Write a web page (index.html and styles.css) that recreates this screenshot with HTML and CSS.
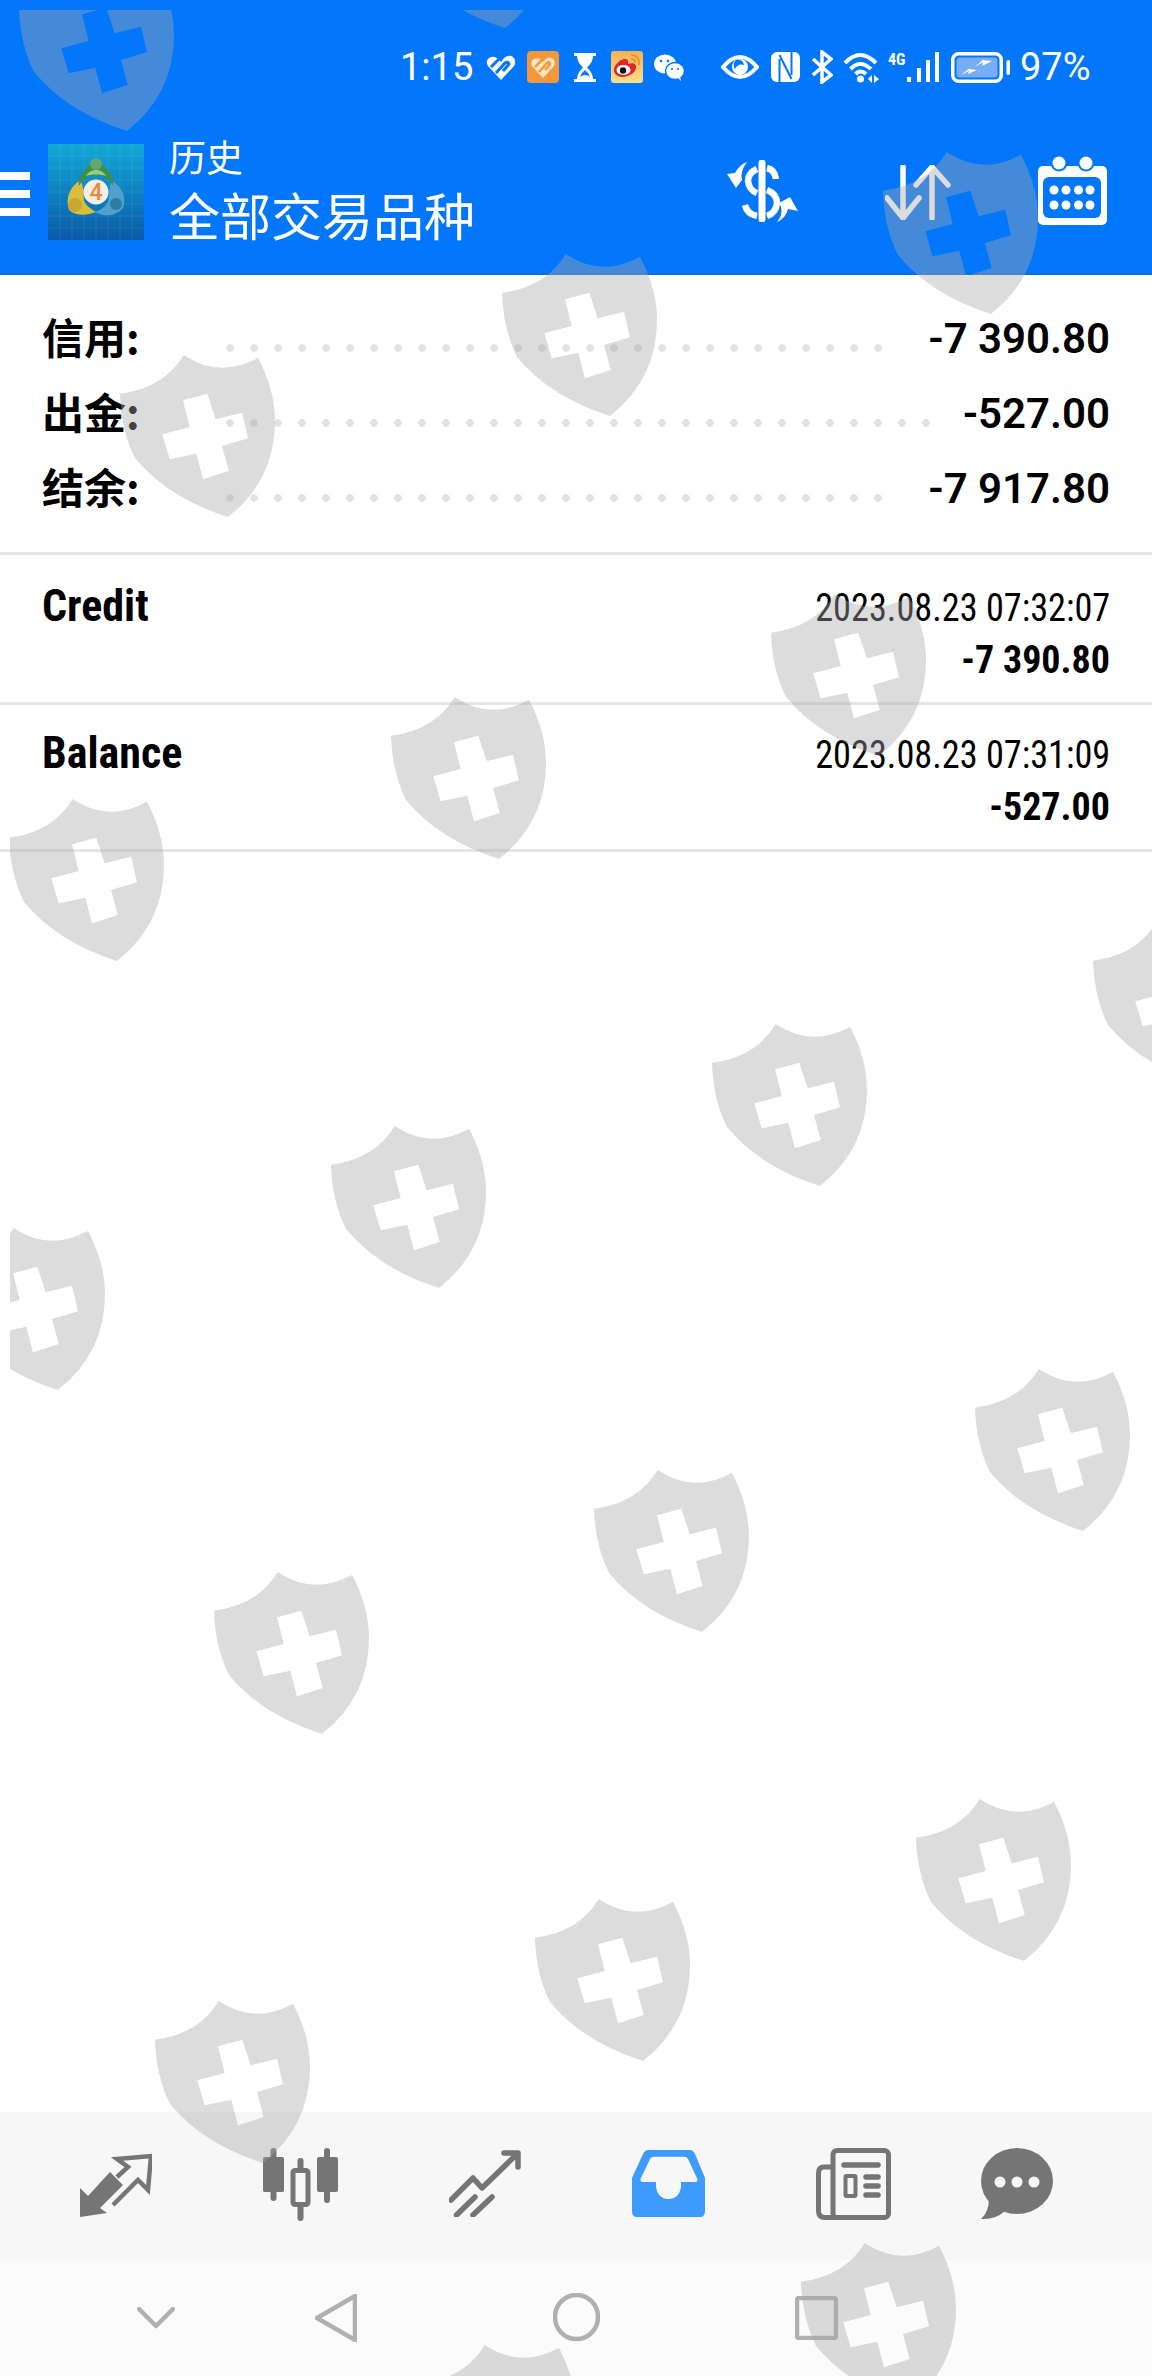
FILE: index.html
```html
<!DOCTYPE html>
<html lang="zh-CN">

<head>
    <meta charset="UTF-8">
    <meta name="viewport" content="width=device-width, initial-scale=1.0">
    <title>历史</title>
    <link rel="stylesheet" href="styles.css">
</head>

<body>
    <div id="screen">
        <!-- Blue top area: phone status bar + app toolbar -->
        <header id="top">
            <div class="statusbar">
                <span class="st-time">1:15</span>
                <svg class="si si-heart" viewBox="0 0 30 25">
                    <path d="M15 25 L2 11 Q-1 6 3 3 Q8 0 12 4 L15 7 L18 3 Q23 -1 27 2 Q31 6 28 11 Z" fill="#fff" />
                    <path d="M5 12 L13 4 M10 18 L19 8 Q22 6 23 9 L17 16" fill="none" stroke="#0277fb" stroke-width="3" />
                </svg>
                <svg class="si si-box" viewBox="0 0 32 32">
                    <rect width="32" height="32" rx="4" fill="#f5983c" />
                    <path d="M16 27 L5 15 Q3 10 7 8 Q11 6 14 9 L16 11 L19 8 Q23 5 26 8 Q29 11 27 15 Z" fill="#fde6c8" />
                    <path d="M8 16 L15 9 M12 21 L20 12 Q22 10 23 13 L18 19" fill="none" stroke="#f5983c" stroke-width="2.500" />
                </svg>
                <svg class="si si-glass" viewBox="0 0 24 29">
                    <path d="M1 0 H23 V3 H20 Q20 9 14 14.500 Q20 20 20 26 H23 V29 H1 V26 H4 Q4 20 10 14.500 Q4 9 4 3 H1 Z" fill="#fff" />
                    <path d="M12 17 Q8 20 7 24 Q12 20 17 24 Q16 20 12 17 Z" fill="#0277fb" />
                </svg>
                <svg class="si si-weibo" viewBox="0 0 32 32">
                    <defs>
                        <linearGradient id="weibo-bg" x1="0" y1="0" x2="0" y2="1">
                            <stop offset="0" stop-color="#f6b04e" />
                            <stop offset="1" stop-color="#fbe08a" />
                        </linearGradient>
                    </defs>
                    <rect width="32" height="32" rx="3" fill="url(#weibo-bg)" />
                    <path d="M3 19 C3 13 11 7 15 8 C18 9 17 12 17 13 C22 11 26 13 25 17 C24 23 16 26 11 26 C7 26 3 23 3 19 Z" fill="#e0242c" />
                    <ellipse cx="12.500" cy="19" rx="7" ry="5" fill="#fff" />
                    <circle cx="12" cy="19.500" r="3.200" fill="#111" />
                    <path d="M20 4 Q29 4 28 14 M20 8 Q25 8 24 12" fill="none" stroke="#e88a2c" stroke-width="1.500" />
                </svg>
                <svg class="si si-chat" viewBox="0 0 30 27">
                    <ellipse cx="11" cy="10" rx="11" ry="9.500" fill="#fff" />
                    <ellipse cx="21" cy="17" rx="9.500" ry="8.500" fill="#fff" stroke="#0277fb" stroke-width="1.500" />
                    <path d="M24 24 L27 27 L26 22 Z" fill="#fff" />
                    <circle cx="7" cy="7" r="1.300" fill="#0277fb" />
                    <circle cx="14" cy="7" r="1.300" fill="#0277fb" />
                    <circle cx="18" cy="15" r="1.100" fill="#0277fb" />
                    <circle cx="24" cy="15" r="1.100" fill="#0277fb" />
                </svg>
                <svg class="si si-eye" viewBox="0 0 38 26">
                    <path d="M2 13 Q19 -7 36 13 Q19 33 2 13 Z" fill="none" stroke="#fff" stroke-width="4" />
                    <circle cx="19" cy="13" r="8" fill="#fff" />
                    <path d="M15 6 Q22 5 23 11 Q17 9 14 15 Q11 10 15 6 Z" fill="#0277fb" />
                </svg>
                <svg class="si si-nfc" viewBox="0 0 29 30">
                    <rect width="29" height="30" rx="6" fill="#fff" />
                    <path d="M8.500 7 V30 M8.500 3 L20.500 27 M20.500 0 V23" fill="none" stroke="#0277fb" stroke-width="2" />
                </svg>
                <svg class="si si-bt" viewBox="0 0 22 34">
                    <path d="M2 9 L20 25 L11 32 V2 L20 9 L2 25" fill="none" stroke="#fff" stroke-width="3.500" />
                </svg>
                <svg class="si si-wifi" viewBox="0 0 37 32">
                    <path d="M2 12 Q17 -4 33 12 M7.500 18 Q17 8 28 18 M12.500 23 Q17.500 18 23 23" fill="none" stroke="#fff" stroke-width="4" />
                    <circle cx="17.500" cy="28" r="3.500" fill="#fff" />
                    <path d="M25 28 L29 24 V32 Z M31 24 L36 28 L31 32 Z" fill="#fff" />
                </svg>
                <div class="si si-signal">
                    <span class="st-4g">4G</span>
                    <svg class="si-bars" viewBox="0 0 33 30">
                        <path d="M3 30 V25 M13 30 V16 M22 30 V8 M31 30 V0" stroke="#fff" stroke-width="4" />
                    </svg>
                </div>
                <svg class="si si-battery" viewBox="0 0 59 31">
                    <rect x="1.750" y="1.750" width="48.500" height="27.500" rx="6" fill="none" stroke="#fff" stroke-width="3.500" />
                    <rect x="5.500" y="5.500" width="41" height="20" rx="3" fill="#77adf2" />
                    <path d="M10 23 L18 19 L17 22 L26 18 L18 17 L20 15 Z M24 15 L32 10 L31 14 L41 9 L32 8 L34 6 Z" fill="#fff" />
                    <rect x="55.500" y="8" width="3.500" height="15" rx="1.700" fill="#fff" />
                </svg>
                <span class="st-batt">97%</span>
            </div>
            <div class="toolbar">
                <div class="burger"><span></span><span></span><span></span></div>
                <svg class="app-logo" viewBox="0 0 96 96">
                    <defs>
                        <linearGradient id="logo-bg" x1="0" y1="0" x2="0" y2="1">
                            <stop offset="0" stop-color="#12a8d6" />
                            <stop offset="1" stop-color="#0a5aa8" />
                        </linearGradient>
                    </defs>
                    <rect width="96" height="96" fill="url(#logo-bg)" />
                    <path d="M12 0 V96 M24 0 V96 M36 0 V96 M48 0 V96 M60 0 V96 M72 0 V96 M84 0 V96 M0 12 H96 M0 24 H96 M0 36 H96 M0 48 H96 M0 60 H96 M0 72 H96 M0 84 H96" stroke="#fff" stroke-opacity=".08" />
                    <path d="M33 36 C22 42 17 54 21 66 C29 73 40 71 48 68 C38 62 34 58 36 48 Z" fill="#d9be3e" />
                    <path d="M63 36 C74 42 79 54 75 64 C67 73 56 73 47 68 C58 64 62 58 61 48 Z" fill="#4fa0cc" />
                    <path d="M31 42 C29 28 40 24 48 15 C56 24 67 28 65 42 C60 33 55 31 48 31 C41 31 36 33 31 42 Z" fill="#3d8f50" />
                    <path d="M38 32 C40 28 44 26 48 26 C52 26 56 28 58 32 C54 30 42 30 38 32 Z" fill="#9ccb7c" />
                    <circle cx="48" cy="20" r="6" fill="#62a86a" />
                    <circle cx="27" cy="61" r="7" fill="#c7a633" />
                    <circle cx="68" cy="60" r="6" fill="#2b7da8" />
                    <circle cx="48" cy="48" r="12.500" fill="#f5eee4" />
                    <text x="48" y="56" class="logo-four">4</text>
                </svg>
                <div class="titles">
                    <div class="title-small">历史</div>
                    <div class="title-main">全部交易品种</div>
                </div>
                <svg class="tool tool-dollar" viewBox="0 0 72 62">
                    <path d="M36 3 V59" stroke="#fff" stroke-width="7" stroke-linecap="round" />
                    <path d="M41 8 Q49 10 50 19 M31 9 Q22 13 22 21 Q23 30 31 33 M41 30 Q51 34 51 43 Q50 53 41 56 M19 45 Q21 54 31 56" fill="none" stroke="#fff" stroke-width="6.500" />
                    <path d="M21 2 Q13 5 9 13 L1 14 L10 28 L16 20 Q14 11 21 2 Z" fill="#fff" />
                    <path d="M51 62 Q60 58 62 49 L72 51 L64 37 L53 43 L55 47 Q57 55 51 62 Z" fill="#fff" />
                </svg>
                <svg class="tool tool-arrows" viewBox="0 0 66 55">
                    <path d="M18 2 V53 M2 33 L18 53 L34 33 M47 53 V2 M31 20 L47 2 L63 20" fill="none" stroke="#fff" stroke-width="5.500" stroke-linecap="round" stroke-linejoin="round" />
                </svg>
                <svg class="tool tool-cal" viewBox="0 0 69 69">
                    <rect y="10" width="69" height="59" rx="5" fill="#fff" />
                    <rect x="5" y="21" width="58" height="41" rx="6" fill="#0277fb" />
                    <circle cx="21" cy="7" r="8.500" fill="#0277fb" />
                    <circle cx="48" cy="7" r="8.500" fill="#0277fb" />
                    <circle cx="21" cy="7" r="6.500" fill="#fff" />
                    <circle cx="48" cy="7" r="6.500" fill="#fff" />
                    <g fill="#fff">
                        <circle cx="16" cy="34" r="4.500" />
                        <circle cx="28" cy="34" r="4.500" />
                        <circle cx="40.500" cy="34" r="4.500" />
                        <circle cx="52" cy="34" r="4.500" />
                        <circle cx="16" cy="49" r="4.500" />
                        <circle cx="28" cy="49" r="4.500" />
                        <circle cx="40.500" cy="49" r="4.500" />
                        <circle cx="52" cy="49" r="4.500" />
                    </g>
                </svg>
            </div>
        </header>

        <!-- Totals -->
        <section class="summary">
            <div class="sum-row sum-long">
                <span class="sum-label">信用:</span><span class="sum-dots"></span><span class="sum-value">-7 390.80</span>
            </div>
            <div class="sum-row sum-short">
                <span class="sum-label">出金:</span><span class="sum-dots"></span><span class="sum-value">-527.00</span>
            </div>
            <div class="sum-row sum-long">
                <span class="sum-label">结余:</span><span class="sum-dots"></span><span class="sum-value">-7 917.80</span>
            </div>
        </section>

        <!-- Deals -->
        <section class="deal deal-first">
            <div class="deal-name">Credit</div>
            <div class="deal-right">
                <div class="deal-date">2023.08.23 07:32:07</div>
                <div class="deal-amount">-7 390.80</div>
            </div>
        </section>
        <section class="deal">
            <div class="deal-name">Balance</div>
            <div class="deal-right">
                <div class="deal-date">2023.08.23 07:31:09</div>
                <div class="deal-amount">-527.00</div>
            </div>
        </section>

        <div class="spacer"></div>

        <nav class="tabs">
            <svg class="tab tab-trade" viewBox="0 0 72 64">
                <path d="M0 35 L8 43 L30 19 L43 32 L20 55 L27 60 L0 64 Z" fill="#757575" />
                <path d="M33 52 L58 27 L68 37 L71 3 L37 6 L48 14 L37 24" fill="none" stroke="#757575" stroke-width="4.500" />
            </svg>
            <svg class="tab tab-candles" viewBox="0 0 75 74">
                <g stroke="#757575" stroke-linecap="round">
                    <path d="M10.500 3 V50 M37.500 13 V70 M64 3 V52" stroke-width="6" />
                </g>
                <rect y="9" width="21" height="35" rx="2" fill="#757575" />
                <rect x="54" y="9" width="21" height="35" rx="2" fill="#757575" />
                <rect x="30" y="22.500" width="15" height="34" rx="2" fill="#f7f7f7" stroke="#757575" stroke-width="5" />
            </svg>
            <svg class="tab tab-chart" viewBox="0 0 72 67">
                <path d="M2 50 L24 28 L33 38 L68 4 M55 3 H69 V17 M7.500 65 L26 47 M24 65 L43 47" fill="none" stroke="#757575" stroke-width="5.500" stroke-linecap="round" stroke-linejoin="round" />
            </svg>
            <svg class="tab tab-inbox" viewBox="0 0 73 67">
                <path d="M16 0 H58 Q61 0 63 4 L73 28 V61 Q73 67 68 67 H5 Q0 67 0 61 V28 L11 4 Q13 0 16 0 Z" fill="#3d9bff" />
                <path d="M22 6.700 H52 Q55 6.700 56 9 L65.400 29 Q66 32 63 32 H49 V37 Q47 49 36.500 49 Q26 49 24 37 V32 H11 Q8 32 8.500 29 L18 9 Q19 6.700 22 6.700 Z" fill="#f7f7f7" />
            </svg>
            <svg class="tab tab-news" viewBox="0 0 75 72">
                <rect x="17" y="2.500" width="55.500" height="67" rx="4" fill="none" stroke="#757575" stroke-width="5" />
                <path d="M16 19 H8 Q2.500 19 2.500 25 V63 Q2.500 69.500 9 69.500 H20" fill="none" stroke="#757575" stroke-width="5" />
                <path d="M28 17 H62 M50 29 H62 M50 38 H62 M50 47 H62" stroke="#757575" stroke-width="5.500" stroke-linecap="round" />
                <rect x="29.500" y="28" width="10" height="20" rx="1" fill="none" stroke="#757575" stroke-width="4" />
            </svg>
            <svg class="tab tab-talk" viewBox="0 0 72 72">
                <ellipse cx="36" cy="33" rx="36" ry="33" fill="#757575" />
                <path d="M8 50 Q8 64 0 71 Q14 72 24 63 Z" fill="#757575" />
                <circle cx="19" cy="34" r="5.500" fill="#f7f7f7" />
                <circle cx="36" cy="34" r="5.500" fill="#f7f7f7" />
                <circle cx="53" cy="34" r="5.500" fill="#f7f7f7" />
            </svg>
        </nav>

        <nav class="sysbar">
            <svg class="sys sys-down" viewBox="0 0 38 22">
                <path d="M2 2 L19 19 L36 2" />
            </svg>
            <svg class="sys sys-back" viewBox="0 0 42 48">
                <path d="M40 2 V46 L2 24 Z" />
            </svg>
            <svg class="sys sys-home" viewBox="0 0 47 48">
                <ellipse cx="23.500" cy="24" rx="21.500" ry="22" />
            </svg>
            <svg class="sys sys-recent" viewBox="0 0 43 44">
                <rect x="2" y="2" width="39" height="40" rx="2" />
            </svg>
        </nav>

        <!-- Watermark lies over everything -->
        <svg class="watermark" viewBox="0 0 1152 2376">
            <defs>
                <path id="shield" fill-rule="evenodd" d="M63.700 0 Q100 24 138 2.700 Q155 35 155 66 Q155 125 108 162 Q48 143 15 103 Q1 75 0 38.700 Q44 33 63.700 0 Z M63 45.300 L87.300 38.700 L95.700 64.300 L122 57.700 L128 83.300 L102 91 L108.700 116 L83 124.300 L76.300 98.700 L49.700 104.300 L42.300 79.300 L69.700 72 Z" />
            </defs>
            <use href="#shield" x="19" y="-31" />
            <use href="#shield" x="397" y="-134" />
            <use href="#shield" x="120" y="355" />
            <use href="#shield" x="502" y="254" />
            <use href="#shield" x="883" y="152" />
            <use href="#shield" x="9" y="799" />
            <use href="#shield" x="391" y="697" />
            <use href="#shield" x="771" y="594" />
            <use href="#shield" x="-50" y="1228" />
            <use href="#shield" x="331" y="1126" />
            <use href="#shield" x="712" y="1024" />
            <use href="#shield" x="1093" y="922" />
            <use href="#shield" x="214" y="1572" />
            <use href="#shield" x="594" y="1470" />
            <use href="#shield" x="975" y="1369" />
            <use href="#shield" x="155" y="2001" />
            <use href="#shield" x="535" y="1899" />
            <use href="#shield" x="916" y="1799" />
            <use href="#shield" x="421" y="2345" />
            <use href="#shield" x="801" y="2243" />
        </svg>
    </div>
</body>

</html>
```

FILE: styles.css
```css
body {
    margin: 0;
    background-color: #ffffff;
    font-family: Roboto, "Noto Sans CJK SC", sans-serif;
    color: #000000;
}

#screen {
    position: relative;
    width: 1152px;
    height: 2376px;
    overflow: hidden;
    display: flex;
    flex-direction: column;
}

.watermark {
    position: absolute;
    left: 0;
    top: 0;
    width: 1152px;
    height: 2376px;
    clip-path: inset(10px 0 0 10px);
    fill: rgba(168, 168, 168, 0.4);
    pointer-events: none;
}

/* top */
#top {
    height: 273px;
    background-color: #0277fb;
    border-bottom: 2px solid #0b6edc;
    color: #ffffff;
}

.statusbar {
    height: 134px;
    padding-left: 400px;
    display: flex;
    align-items: center;
}

.statusbar span {
    font-size: 38px;
    line-height: 1;
}

.st-time {
    width: 74px;
}

.si {
    display: block;
    flex: none;
}

.si-heart { width: 30px; height: 25px; margin-left: 12px; }
.si-box { width: 32px; height: 32px; margin-left: 11px; }
.si-glass { width: 24px; height: 29px; margin-left: 14px; }
.si-weibo { width: 32px; height: 32px; margin-left: 14px; }
.si-chat { width: 30px; height: 27px; margin-left: 11px; }
.si-eye { width: 38px; height: 26px; margin-left: 37px; }
.si-nfc { width: 29px; height: 30px; margin-left: 12px; }
.si-bt { width: 22px; height: 34px; margin-left: 11px; }
.si-wifi { width: 37px; height: 32px; margin-left: 10px; }
.si-signal { position: relative; width: 51px; height: 30px; margin-left: 8px; }
.si-battery { width: 59px; height: 31px; margin-left: 12px; }

.si-bars {
    position: absolute;
    right: 0;
    top: 0;
    width: 33px;
    height: 30px;
}

.statusbar .st-4g {
    position: absolute;
    left: 0;
    top: 0;
    font-size: 16px;
    font-weight: 700;
    font-stretch: 75%;
}

.statusbar .st-batt {
    margin-left: 10px;
}

.toolbar {
    height: 139px;
    display: flex;
    align-items: flex-start;
}

.burger {
    width: 30px;
    margin-top: 38px;
    display: flex;
    flex-direction: column;
    gap: 10px;
}

.burger span {
    display: block;
    height: 8px;
    background-color: #ffffff;
}

.app-logo {
    width: 96px;
    height: 96px;
    margin-left: 18px;
    margin-top: 10px;
}

.logo-four {
    font-family: Roboto, sans-serif;
    font-size: 23px;
    font-weight: 500;
    text-anchor: middle;
    fill: #e8893c;
}

.titles {
    width: 557px;
    margin-left: 25px;
    font-family: "Noto Sans CJK SC", sans-serif;
}

.title-small {
    font-size: 37px;
    line-height: 44px;
}

.title-main {
    font-size: 51px;
    line-height: 62px;
    margin-top: 5px;
}

.tool { display: block; flex: none; }
.tool-dollar { width: 72px; height: 62px; margin-top: 26px; }
.tool-arrows { width: 66px; height: 55px; margin-top: 31px; margin-left: 87px; }
.tool-cal { width: 69px; height: 69px; margin-top: 22px; margin-left: 87px; }

/* totals */
.summary {
    padding: 26px 42px 26px;
    border-bottom: 3px solid #e6e6e6;
}

.sum-row {
    height: 75px;
    display: flex;
    align-items: center;
}

.sum-label {
    width: 184px;
    margin-bottom: 6px;
    font-family: "Noto Sans CJK SC", sans-serif;
    font-size: 42px;
    font-weight: 700;
}

.sum-dots {
    height: 8px;
    margin-top: 18px;
    background-image: radial-gradient(circle at 4px 4px, #e2e2e2 3.5px, transparent 4px);
    background-size: 24px 8px;
    background-repeat: repeat-x;
}

.sum-long .sum-dots { width: 672px; }
.sum-short .sum-dots { width: 720px; }

.sum-value {
    margin-left: auto;
    font-size: 42px;
    font-weight: 600;
}

/* deals */
.deal {
    height: 144px;
    padding: 0 42px;
    border-bottom: 3px solid #e6e6e6;
    display: flex;
    justify-content: space-between;
}

.deal-first {
    padding-top: 3px;
}

.deal-name {
    margin-top: 23px;
    font-size: 44px;
    line-height: 50px;
    font-weight: 700;
    font-stretch: 75%;
}

.deal-right {
    text-align: right;
    margin-top: 25px;
}

.deal-date {
    font-size: 39px;
    line-height: 50px;
    font-stretch: 75%;
    transform: scaleX(0.93);
    transform-origin: right;
}

.deal-amount {
    margin-top: 2px;
    font-size: 38px;
    line-height: 50px;
    font-weight: 700;
    font-stretch: 75%;
}

.spacer {
    flex: 1;
}

/* bottom tabs */
.tabs {
    height: 148px;
    background-color: #f7f7f7;
    padding-left: 80px;
    display: flex;
    align-items: flex-start;
    gap: 111px;
}

.tab { display: block; flex: none; }
.tab-trade { width: 72px; height: 64px; margin-top: 41px; }
.tab-candles { width: 75px; height: 74px; margin-top: 36px; }
.tab-chart { width: 72px; height: 67px; margin-top: 38px; }
.tab-inbox { width: 73px; height: 67px; margin-top: 38px; }
.tab-news { width: 75px; height: 72px; margin-top: 36px; }
.tab-talk { width: 72px; height: 72px; margin-top: 36px; margin-left: -21px; }

.sysbar {
    height: 116px;
    background-color: #fbfbfb;
    padding-left: 137px;
    display: flex;
    align-items: flex-start;
}

.sys {
    display: block;
    flex: none;
    fill: none;
    stroke: #b0b0b0;
    stroke-width: 4.5;
    stroke-linejoin: round;
    stroke-linecap: round;
}

.sys-down { width: 38px; height: 22px; margin-top: 47px; }
.sys-back { width: 42px; height: 48px; margin-top: 34px; margin-left: 140px; }
.sys-home { width: 47px; height: 48px; margin-top: 33px; margin-left: 196px; }
.sys-recent { width: 43px; height: 44px; margin-top: 36px; margin-left: 195px; }
```
